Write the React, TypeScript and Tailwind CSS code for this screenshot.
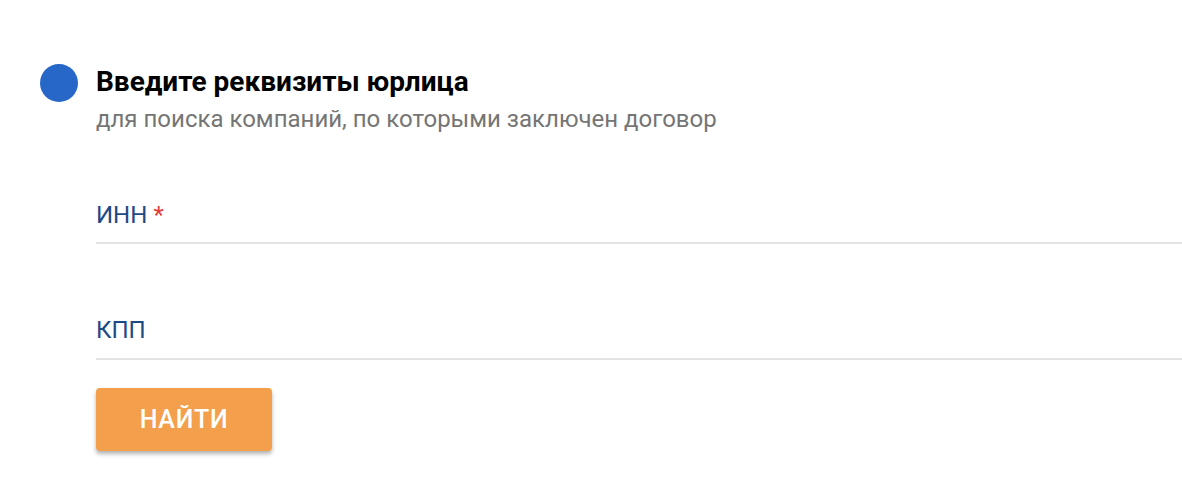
import React from "react";

export default function App() {
  return (
    <div className="w-[1182px] h-[482px] bg-white overflow-hidden font-['Roboto','Liberation_Sans',sans-serif]">
      <div className="pt-[64px] pl-[40px] flex gap-[18px]">
        <div className="w-[38px] h-[38px] rounded-full bg-[#2767c8] shrink-0" />
        <div className="flex-1 flex flex-col items-start">
          <div className="text-[28px] leading-[36px] font-bold text-black">Введите реквизиты юрлица</div>
          <div className="mt-[5px] text-[24px] leading-[28px] text-[#757575]">для поиска компаний, по которыми заключен договор</div>
          <div className="self-stretch mt-[68px] border-b-2 border-[#e3e3e3] pb-[13px] text-[24px] leading-[28px]">
            <span className="text-[#1d4a85]">ИНН</span>
            <span className="text-[#e53935] ml-[6px]">*</span>
          </div>
          <div className="self-stretch mt-[72px] border-b-2 border-[#e3e3e3] pb-[14px] text-[24px] leading-[28px]">
            <span className="text-[#1d4a85]">КПП</span>
          </div>
          <button className="mt-[28px] w-[176px] h-[63px] rounded-[4px] bg-[#f39f4c] text-white text-[25px] leading-[28px] font-medium tracking-[0.7px] shadow-[0_3px_4px_rgba(0,0,0,0.3)]">
            НАЙТИ
          </button>
        </div>
      </div>
    </div>
  );
}
